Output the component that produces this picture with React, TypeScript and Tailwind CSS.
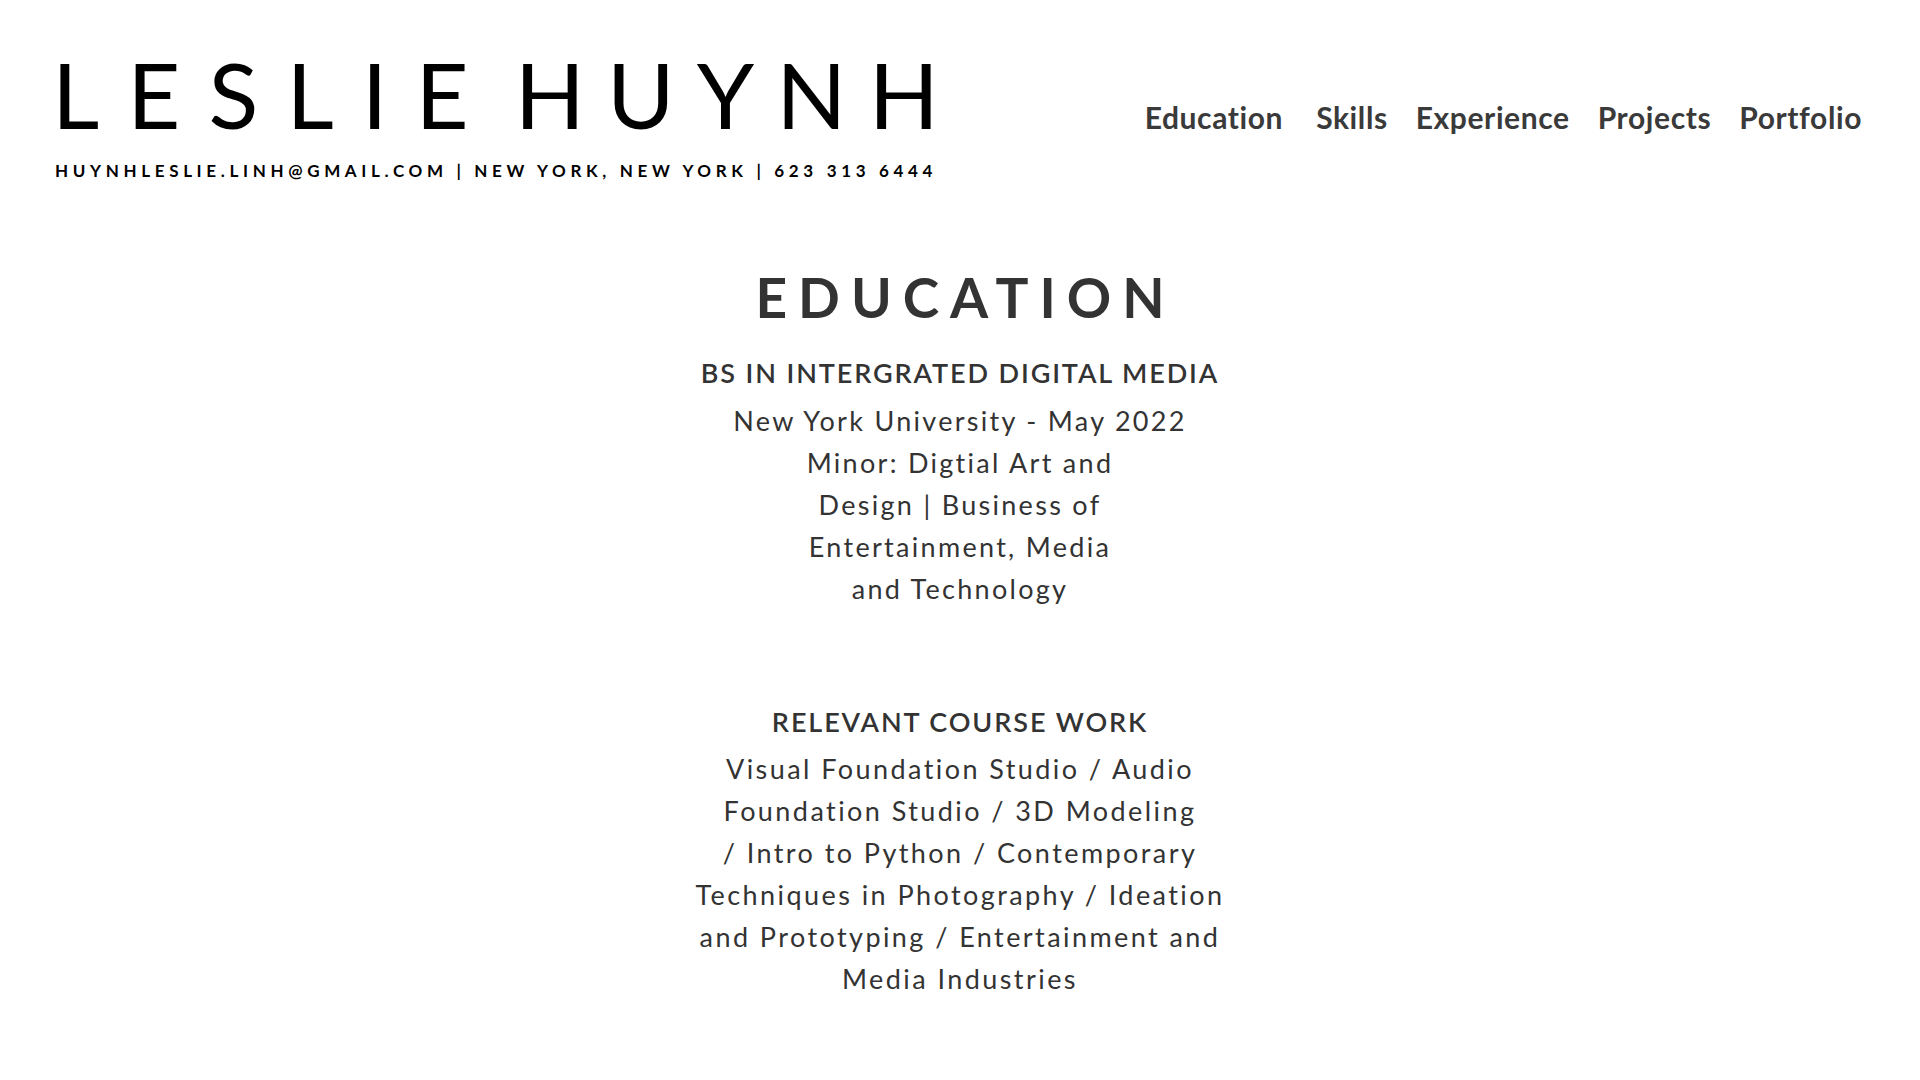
export default function App() {
  const font = { fontFamily: "Lato, 'Open Sans', sans-serif" }

  return (
    <div className="min-h-screen w-full bg-white text-[#333]" style={font}>
      {/* header */}
      <header className="flex items-start justify-between pl-[52px] pr-[58px] pt-[48px]">
        <div>
          <h1 className="flex gap-[18px] text-[92px] font-normal leading-none text-black">
            <span className="tracking-[0.305em]">LESLIE</span>
            <span className="tracking-[0.24em]">HUYNH</span>
          </h1>
          <p className="mt-[22px] pl-[3px] text-[17px] font-bold leading-none tracking-[0.274em] text-black">
            HUYNHLESLIE.LINH@GMAIL.COM | NEW YORK, NEW YORK | 623 313 6444
          </p>
        </div>
        <nav className="mt-[47px] flex items-center gap-[28px] text-[30px] font-bold tracking-[0.02em] text-[#3a3a3a]">
          <a className="mr-[5px]">Education</a>
          <a>Skills</a>
          <a>Experience</a>
          <a>Projects</a>
          <a>Portfolio</a>
        </nav>
      </header>

      {/* education */}
      <main className="mt-[91px] flex flex-col items-center text-center">
        <h2 className="pl-[0.2em] text-[55px] font-bold leading-none tracking-[0.2em] text-[#333]">EDUCATION</h2>

        <h3 className="mt-[28px] text-[27px] font-semibold tracking-[0.07em] text-[#333]">BS IN INTERGRATED DIGITAL MEDIA</h3>
        <div className="mt-[6px] text-[27px] leading-[42px] tracking-[0.085em] text-[#333]">
          <p>New York University - May 2022</p>
          <p>Minor: Digtial Art and</p>
          <p>Design | Business of</p>
          <p>Entertainment, Media</p>
          <p>and Technology</p>
        </div>

        <h3 className="mt-[92px] text-[27px] font-semibold tracking-[0.07em] text-[#333]">RELEVANT COURSE WORK</h3>
        <div className="mt-[6px] text-[27px] leading-[42px] tracking-[0.09em] text-[#333]">
          <p>Visual Foundation Studio / Audio</p>
          <p>Foundation Studio / 3D Modeling</p>
          <p>/ Intro to Python / Contemporary</p>
          <p>Techniques in Photography / Ideation</p>
          <p>and Prototyping / Entertainment and</p>
          <p>Media Industries</p>
        </div>
      </main>
    </div>
  )
}
